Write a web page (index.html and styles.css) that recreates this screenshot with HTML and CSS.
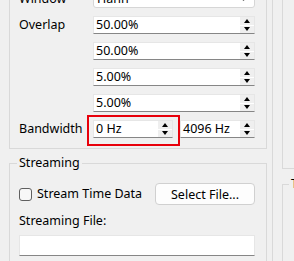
FILE: index.html
```html
<!DOCTYPE html>
<html lang="en">
    <head>
        <meta charset="UTF-8">
        <meta name="viewport" content="width=device-width, initial-scale=1.0">
        <title>Spectrum Settings</title>
        <link rel="stylesheet" href="styles.css">
    </head>
    <body>
        <div class="window">
            <div class="left-pane">
                <fieldset class="group group-analysis">
                    <div class="form-grid">
                        <span class="label">Window</span>
                        <div class="combo">
                            <span class="field-text">Hann</span>
                            <span class="combo-arrow"></span>
                        </div>

                        <span class="label">Overlap</span>
                        <div class="spin">
                            <span class="field-text">50.00%</span>
                            <span class="spin-buttons"><span class="up"></span><span class="down"></span></span>
                        </div>

                        <span></span>
                        <div class="spin">
                            <span class="field-text">50.00%</span>
                            <span class="spin-buttons"><span class="up"></span><span class="down"></span></span>
                        </div>

                        <span></span>
                        <div class="spin">
                            <span class="field-text">5.00%</span>
                            <span class="spin-buttons"><span class="up"></span><span class="down"></span></span>
                        </div>

                        <span></span>
                        <div class="spin">
                            <span class="field-text">5.00%</span>
                            <span class="spin-buttons"><span class="up"></span><span class="down"></span></span>
                        </div>

                        <span class="label">Bandwidth</span>
                        <div class="range">
                            <div class="spin spin-low">
                                <span class="field-text">0 Hz</span>
                                <span class="spin-buttons"><span class="up"></span><span class="down"></span></span>
                            </div>
                            <div class="spin spin-high">
                                <span class="field-text">4096 Hz</span>
                                <span class="spin-buttons"><span class="up"></span><span class="down"></span></span>
                            </div>
                            <div class="highlight"></div>
                        </div>
                    </div>
                </fieldset>

                <fieldset class="group group-streaming">
                    <legend>Streaming</legend>
                    <div class="stream-row">
                        <label class="check">
                            <span class="check-box"></span>
                            Stream Time Data
                        </label>
                        <button class="btn">Select File...</button>
                    </div>
                    <div class="label stream-label">Streaming File:</div>
                    <div class="line-edit"></div>
                </fieldset>
            </div>

            <div class="right-pane">
                <fieldset class="group group-right-top"></fieldset>
                <fieldset class="group group-right-bottom">
                    <legend>Trigger</legend>
                </fieldset>
            </div>
        </div>
    </body>
</html>
```

FILE: styles.css
```css
/* Qt-like settings panel */
body {
    margin: 0;
    background-color: #f0f0f0;
    overflow: hidden;
    font-family: "Noto Sans", "DejaVu Sans", sans-serif;
    font-size: 12.5px;
    color: #000;
}
.window {
    display: flex;
    height: 261px;
    overflow: hidden;
}
.left-pane {
    width: 272px;
    flex: none;
}
.right-pane {
    flex: 1;
    border-left: 1px solid #d9d9d9;
    padding-left: 9px;
    overflow: hidden;
}
.group {
    margin: 0;
    border: 1px solid #d9d9d9;
    min-width: 0;
}
.group legend {
    padding: 0 2px;
    margin-left: -2px;
    line-height: 16px;
}
.group-analysis {
    margin: -30px 0 0 9px;
    width: 258px;
    box-sizing: border-box;
    padding: 19px 11px 10px 9px;
}
.form-grid {
    display: grid;
    grid-template-columns: 74px 162px;
    grid-auto-rows: 18px;
    row-gap: 8px;
    align-items: center;
}
.label {
    line-height: 16px;
}
.combo,
.spin,
.line-edit {
    background-color: #fff;
    box-sizing: border-box;
    display: flex;
    align-items: center;
    height: 18px;
}
.combo {
    border: 1px solid #d6d6d6;
    border-radius: 3px;
    padding-left: 3px;
    padding-right: 8px;
}
.combo-arrow {
    margin-left: auto;
    width: 4px;
    height: 4px;
    border-right: 1px solid #777;
    border-bottom: 1px solid #777;
    transform: rotate(45deg);
    margin-top: -3px;
}
.spin {
    border: 1px solid #e6e6e6;
    border-bottom: 1px solid #868686;
    padding-left: 2px;
    padding-right: 0;
}
.field-text {
    line-height: 16px;
    flex: 1;
    white-space: nowrap;
}
.spin-buttons {
    display: flex;
    flex-direction: column;
    gap: 1px;
    width: 14px;
    height: 16px;
    background-color: #fff;
}
.spin-buttons span {
    flex: 1;
    background-color: #efefef;
    display: flex;
    align-items: center;
    justify-content: center;
}
.spin-buttons .up::before {
    content: "";
    border-left: 3px solid transparent;
    border-right: 3px solid transparent;
    border-bottom: 4px solid #000;
}
.spin-buttons .down::before {
    content: "";
    border-left: 3px solid transparent;
    border-right: 3px solid transparent;
    border-top: 4px solid #000;
}
.range {
    display: flex;
    gap: 7px;
    position: relative;
}
.spin-low {
    width: 80px;
}
.spin-high {
    flex: 1;
}
.highlight {
    position: absolute;
    left: -6px;
    top: -5px;
    width: 93px;
    height: 31px;
    box-sizing: border-box;
    border: 2px solid #e8000b;
}
.group-streaming {
    margin: 6px 0 0 9px;
    width: 258px;
    box-sizing: border-box;
    padding: 12px 11px 10px 9px;
}
.stream-row {
    display: flex;
    align-items: center;
    height: 22px;
}
.check {
    display: flex;
    align-items: center;
    gap: 5px;
    line-height: 16px;
}
.check-box {
    width: 13px;
    height: 13px;
    box-sizing: border-box;
    border: 1px solid #5f5f5f;
    border-radius: 3px;
    background-color: #f7f7f7;
}
.btn {
    margin-left: auto;
    width: 100px;
    height: 22px;
    font: inherit;
    color: #000;
    background-color: #fdfdfd;
    border: 1px solid #d0d0d0;
    border-radius: 4px;
    padding: 0;
}
.stream-label {
    margin-top: 8px;
}
.line-edit {
    margin-top: 6px;
    height: 21px;
    border: 1px solid #e6e6e6;
    border-bottom: 1px solid #868686;
}
.group-right-top {
    margin-top: -33px;
    height: 202px;
    width: 120px;
    box-sizing: border-box;
    padding: 0;
}
.group-right-bottom {
    margin-top: 7px;
    width: 120px;
    height: 120px;
    box-sizing: border-box;
    padding: 0 0 0 8px;
}
```
